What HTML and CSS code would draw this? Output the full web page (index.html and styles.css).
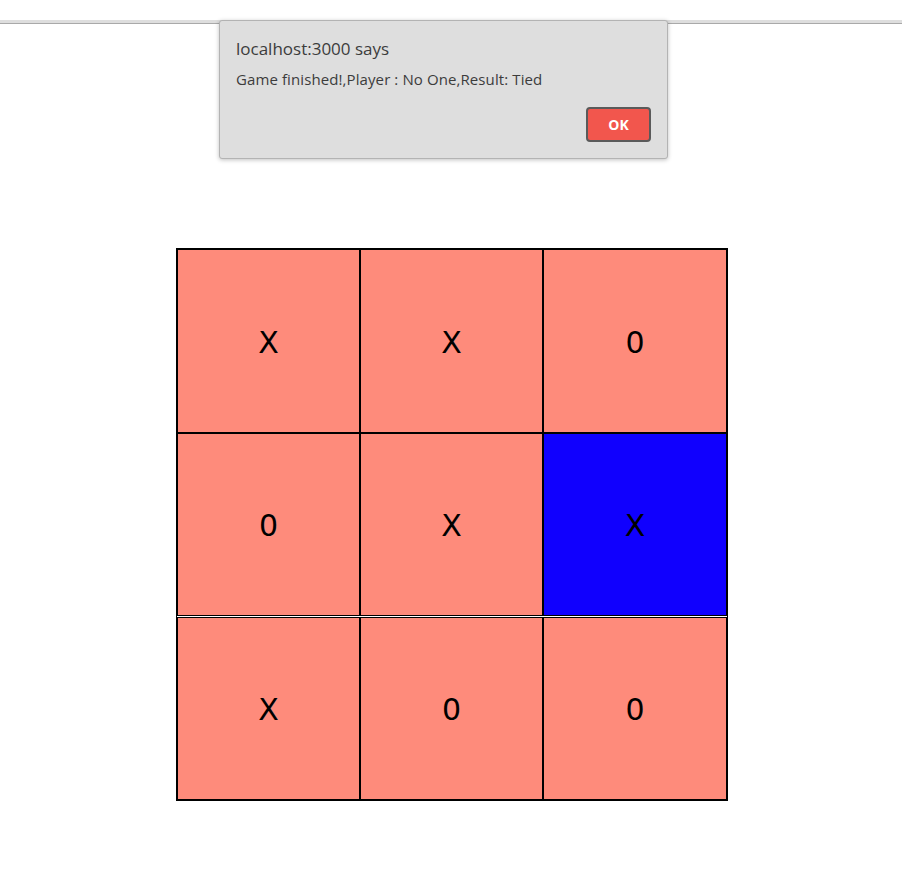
FILE: index.html
```html
<!DOCTYPE html>
<html>
<head>
<meta charset="utf-8">
<link rel="stylesheet" href="styles.css">
</head>
<body>
<div class="topbar"></div>
<main class="page">
  <div class="board">
    <div class="cell">X</div>
    <div class="cell">X</div>
    <div class="cell">0</div>
    <div class="cell">0</div>
    <div class="cell">X</div>
    <div class="cell win">X</div>
    <div class="cell r3">X</div>
    <div class="cell r3">0</div>
    <div class="cell r3">0</div>
  </div>
</main>
<div class="dialog">
  <div class="dialog-title">localhost:3000 says</div>
  <div class="dialog-msg">Game finished!,Player : No One,Result: Tied</div>
  <div class="dialog-actions"><button class="ok">OK</button></div>
</div>
</body>
</html>
```
FILE: styles.css
```css
html, body {
  margin: 0;
  padding: 0;
  background: #ffffff;
}
body {
  font-family: "DejaVu Sans", sans-serif;
  position: relative;
  width: 902px;
  height: 881px;
  overflow: hidden;
}
.topbar {
  margin-top: 20px;
  height: 3px;
  background: #dedede;
  border-bottom: 1px solid #a9a9a9;
}
.page {
  padding-top: 224px;
  padding-left: 176px;
}
.board {
  box-sizing: border-box;
  width: 552px;
  border: 1px solid #000;
  display: grid;
  grid-template-columns: 183px 183px 184px;
  grid-template-rows: 184px 183px 184px;
}
.cell {
  box-sizing: border-box;
  border: 1px solid #000;
  background: #fe8b7b;
  display: flex;
  align-items: center;
  justify-content: center;
  font-size: 30px;
  color: #000;
  padding-top: 2px;
}
.cell.r3 {
  margin-top: 1px;
  height: 183px;
}
.cell.win {
  background: #1000fe;
}
.dialog {
  position: absolute;
  left: 219px;
  top: 20px;
  width: 449px;
  height: 139px;
  box-sizing: border-box;
  background: #dedede;
  border: 1px solid #b3b3b3;
  border-radius: 3px;
  box-shadow: 0 1px 4px rgba(0, 0, 0, 0.25);
  padding: 16px 16px 0 16px;
  font-family: "Open Sans", "Noto Sans", sans-serif;
  color: #3c3c3c;
}
.dialog-title {
  font-size: 17px;
  line-height: 24px;
}
.dialog-msg {
  font-size: 15px;
  line-height: 20px;
  margin-top: 8px;
  letter-spacing: 0.1px;
}
.dialog-actions {
  display: flex;
  justify-content: flex-end;
  margin-top: 18px;
}
.ok {
  width: 65px;
  height: 35px;
  box-sizing: border-box;
  background: #f2564d;
  border: 2px solid #5a5a5a;
  border-radius: 4px;
  color: #ffffff;
  font-family: "Open Sans", "Noto Sans", sans-serif;
  font-weight: bold;
  font-size: 14px;
  padding: 0;
}
```
